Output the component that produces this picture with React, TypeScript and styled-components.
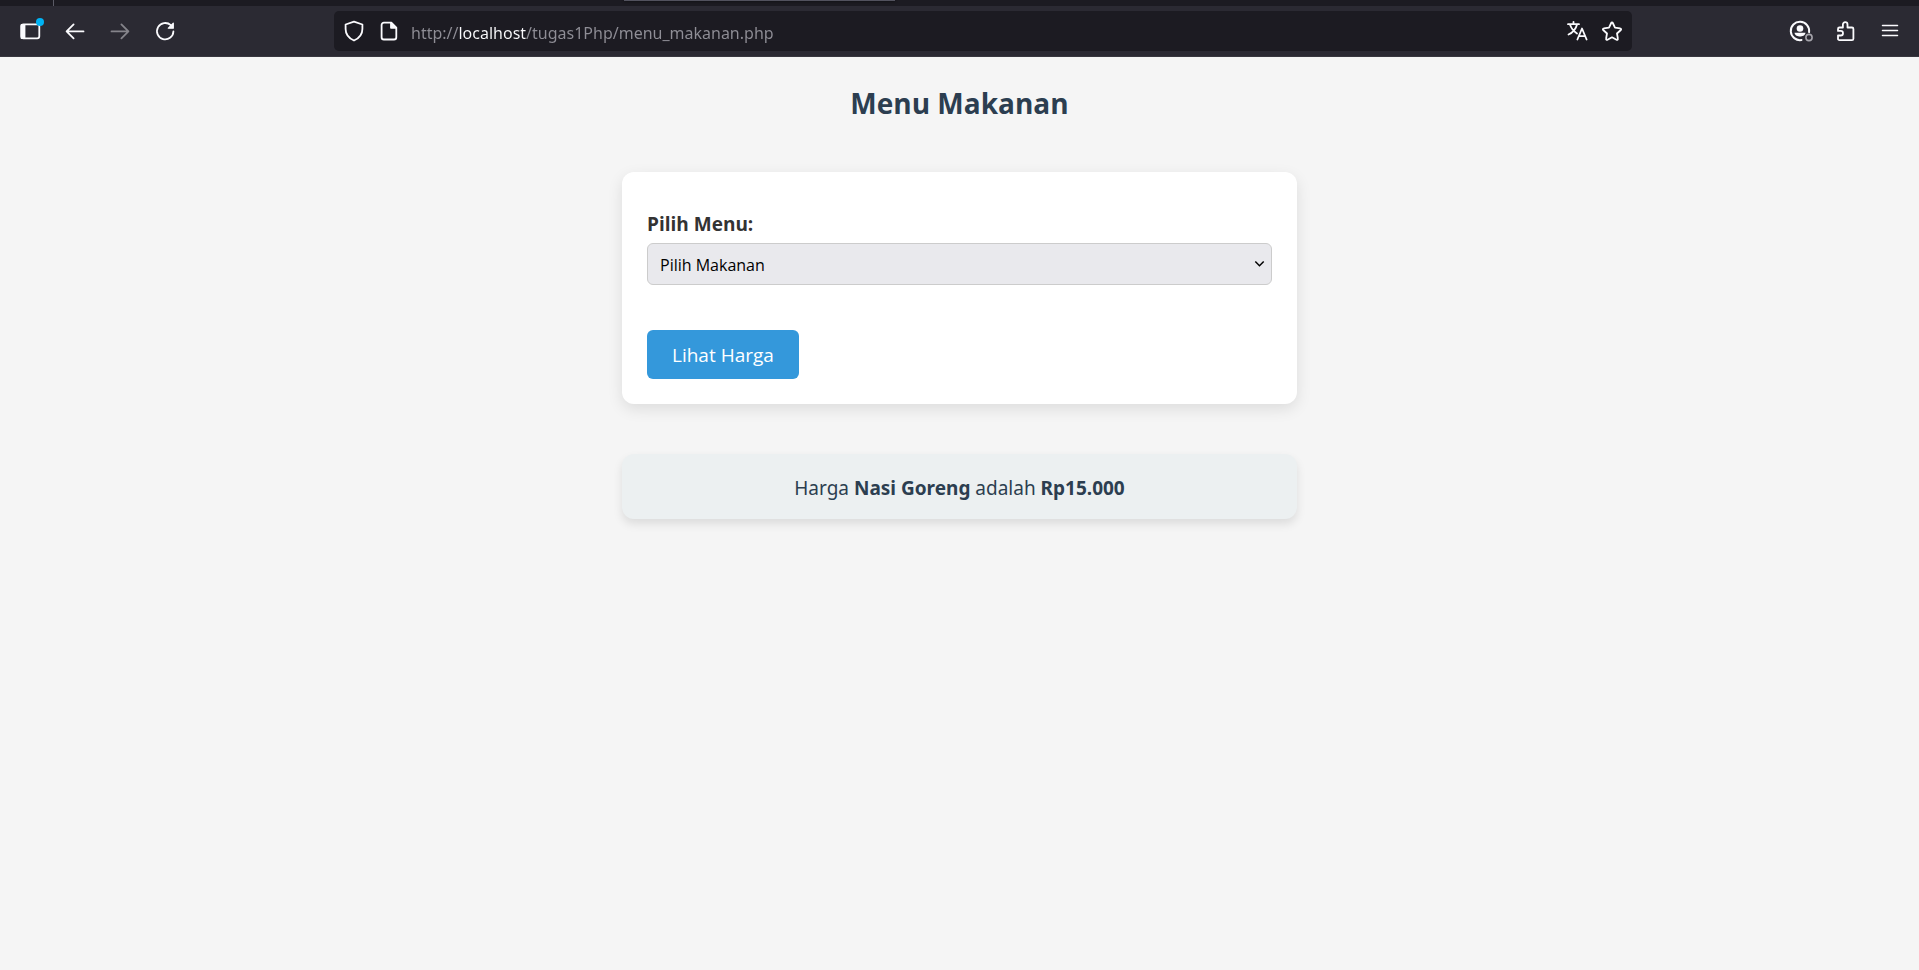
import React, { useState } from 'react';
import styled, { createGlobalStyle } from 'styled-components';

const GlobalStyle = createGlobalStyle`
  * { box-sizing: border-box; }
  body {
    margin: 0;
    background: #f5f5f5;
    color: #333;
    font-family: "Open Sans", "Noto Sans", sans-serif;
  }
`;

const Window = styled.div`
  display: flex;
  flex-direction: column;
  min-height: 100vh;
`;

const TabStrip = styled.div`
  display: flex;
  height: 6px;
  background: #1c1b22;
`;

const TabDivider = styled.span`
  width: 1px;
  margin-left: 53px;
  background: #5b5b66;
`;

const ActiveTab = styled.span`
  width: 271px;
  height: 1px;
  margin-left: 570px;
  background: #52525e;
  box-shadow: 0 0 3px #000;
`;

const Toolbar = styled.header`
  display: grid;
  grid-template-columns: 327px minmax(0, 1fr) 280px;
  align-items: center;
  height: 51px;
  padding: 0 7px;
  background: #2b2a33;
  border-bottom: 1px solid #38373f;
`;

const ButtonGroup = styled.div<{ $end?: boolean }>`
  display: flex;
  justify-content: ${(p) => (p.$end ? 'flex-end' : 'flex-start')};
`;

const IconButton = styled.button<{ $narrow?: boolean }>`
  display: flex;
  align-items: center;
  justify-content: center;
  width: ${(p) => (p.$narrow ? 35 : 45)}px;
  height: 40px;
  padding: 0;
  border: 0;
  background: none;
  color: #fbfbfe;

  &:disabled { color: #85848b; }
`;

const AddressBar = styled.div`
  display: flex;
  align-items: center;
  height: 40px;
  padding: 0 3px 0 2px;
  border-radius: 5px;
  background: #1c1b22;
`;

const AddressInput = styled.input`
  flex: 1;
  min-width: 0;
  height: 40px;
  margin-left: 5px;
  padding: 3px 0 0;
  border: 0;
  outline: 0;
  background: linear-gradient(90deg, #8f8e96 48px, #fbfbfe 48px 115px, #8f8e96 115px);
  background-clip: text;
  -webkit-background-clip: text;
  color: transparent;
  caret-color: #fbfbfe;
  font: 16px "Noto Sans", "Open Sans", sans-serif;
`;

const Page = styled.main`
  display: flex;
  flex-direction: column;
  align-items: center;
  padding: 26px 25px;
`;

const Title = styled.h2`
  margin: 0 0 49px;
  color: #2c3e50;
  font-size: 28px;
  font-weight: 700;
  line-height: 40px;
`;

const Card = styled.form`
  width: 100%;
  max-width: 675px;
  padding: 40px 25px 25px;
  border-radius: 12px;
  background: #fff;
  box-shadow: 0 5px 15px rgba(0, 0, 0, 0.1);
`;

const Label = styled.label`
  display: block;
  margin-bottom: 6px;
  font-size: 19px;
  font-weight: 700;
  line-height: 25px;
`;

const SelectBox = styled.div`
  display: grid;
  align-items: center;
  margin-bottom: 45px;

  > * { grid-area: 1 / 1; }
  > svg { justify-self: end; margin-right: 7px; pointer-events: none; }
`;

const Select = styled.select`
  width: 100%;
  height: 42px;
  padding: 1px 12px 0;
  border: 1px solid #ccc;
  border-radius: 6px;
  appearance: none;
  background: #e9e9ed;
  color: #000;
  font: 16px "Open Sans", "Noto Sans", sans-serif;
`;

const SubmitButton = styled.button`
  display: block;
  height: 49px;
  padding: 1px 25px 0;
  border: 0;
  border-radius: 6px;
  background: #3498db;
  color: #fff;
  font: 19px "Open Sans", "Noto Sans", sans-serif;
  cursor: pointer;
`;

const Result = styled.output`
  display: block;
  width: 100%;
  max-width: 675px;
  margin-top: 50px;
  padding: 22px 20px 18px;
  border-radius: 12px;
  background: #ecf0f1;
  box-shadow: 0 5px 10px rgba(0, 0, 0, 0.1);
  color: #2c3e50;
  font-family: "Noto Sans", "Open Sans", sans-serif;
  font-size: 19px;
  line-height: 25px;
  text-align: center;
`;

const Svg = ({ children, size = 24 }: { children: React.ReactNode; size?: number }) => (
  <svg
    width={size}
    height={size}
    viewBox={`0 0 ${size} ${size}`}
    fill="none"
    stroke="currentColor"
    strokeWidth="1.8"
    strokeLinecap="round"
    strokeLinejoin="round"
    aria-hidden="true"
  >
    {children}
  </svg>
);

const SidebarIcon = () => (
  <Svg size={30}>
    <rect x="6.3" y="8.3" width="18" height="14" rx="2" />
    <path d="M6.500 9h3v13h-3z" fill="currentColor" />
    <circle cx="25" cy="6" r="4" fill="#00b3f4" stroke="none" />
  </Svg>
);

const BackIcon = () => (
  <Svg><path d="M20.5 12.4H4M10.6 5.4l-7 7 7 7" /></Svg>
);

const ForwardIcon = () => (
  <Svg><path d="M3.5 12.4H20M13.4 5.4l7 7-7 7" /></Svg>
);

const ReloadIcon = () => (
  <Svg>
    <path d="M20.4 12.5a8.2 8.2 0 1 1-2.6-6.3" />
    <path d="M20.3 4.2v5h-5z" fill="currentColor" strokeWidth="1.2" />
  </Svg>
);

const ShieldIcon = () => (
  <Svg><path d="M12 2.600 20.4 5.500v4.400c0 4.700-3.400 9.300-8.400 11.600-5-2.300-8.400-6.900-8.400-11.600V5.500z" /></Svg>
);

const PageIcon = () => (
  <Svg>
    <path d="M6.900 3.600h7.400l5 5v9.600a2.300 2.300 0 0 1-2.300 2.300H6.900a2.300 2.300 0 0 1-2.300-2.300V5.900a2.300 2.300 0 0 1 2.300-2.300z" />
    <path d="M14 3.800v5h5z" fill="currentColor" />
  </Svg>
);

const TranslateIcon = () => (
  <Svg>
    <path d="M3 5.200h11M8.500 2.800v2.400M5 5.500c1.200 4 4 7 7 9M12 5.500c-1 4-4 8-8.500 10" />
    <path d="m12.400 20.500 4.600-11 4.600 11M14 17.200h6" />
  </Svg>
);

const StarIcon = () => (
  <Svg>
    <path d="M11.200 4c.3-.8 1.300-.8 1.600 0l2.200 4.600 5.200.7c.9.100 1.200 1.100.6 1.700l-3.800 3.500.9 5.200c.2.900-.700 1.500-1.400 1.100L12 18.300l-4.500 2.500c-.7.400-1.600-.2-1.400-1.100l.9-5.200L3.200 11c-.6-.6-.3-1.600.6-1.700L9 8.600z" />
  </Svg>
);

const AccountIcon = () => (
  <Svg size={26}>
    <path d="M14.500 22a9.200 9.200 0 1 1 7.600-7.800" strokeWidth="2" />
    <circle cx="13" cy="10.500" r="3.300" fill="currentColor" stroke="none" />
    <path d="M7.500 14.800h11c-.3 3-3.400 3.700-5.500 3.700s-5.200-.7-5.500-3.700z" fill="currentColor" stroke="none" />
    <circle cx="22" cy="19.500" r="3.100" stroke="#a5a4ab" strokeWidth="1.600" />
  </Svg>
);

const PuzzleIcon = () => (
  <Svg>
    <path d="M9.900 8.500V5.500a2.300 2.300 0 0 1 4.600 0v3h4.500c.8 0 1.400.6 1.400 1.400v9.800c0 .8-.6 1.400-1.400 1.400H6.400c-.8 0-1.400-.6-1.400-1.400v-3.200h2.700a2.300 2.300 0 0 0 0-4.600H5V9.900c0-.8.600-1.400 1.400-1.400z" />
  </Svg>
);

const MenuIcon = () => (
  <Svg><path d="M4.500 6.500h15M4.500 11.500h15M4.500 16.500h15" strokeWidth="1.500" /></Svg>
);

const menu = [
  { name: 'Nasi Goreng', price: 'Rp15.000' },
  { name: 'Mie Goreng', price: 'Rp12.000' },
];

export default function App() {
  const [choice, setChoice] = useState('');
  const [shown, setShown] = useState(menu[0]);

  const submit = (event: React.FormEvent) => {
    event.preventDefault();
    const item = menu.find((entry) => entry.name === choice);
    if (item) setShown(item);
  };

  return (
    <Window>
      <GlobalStyle />
      <TabStrip>
        <TabDivider />
        <ActiveTab />
      </TabStrip>
      <Toolbar>
        <ButtonGroup>
          <IconButton aria-label="Sidebar"><SidebarIcon /></IconButton>
          <IconButton aria-label="Back"><BackIcon /></IconButton>
          <IconButton aria-label="Forward" disabled><ForwardIcon /></IconButton>
          <IconButton aria-label="Reload"><ReloadIcon /></IconButton>
        </ButtonGroup>
        <AddressBar>
          <IconButton $narrow aria-label="Protection"><ShieldIcon /></IconButton>
          <IconButton $narrow aria-label="Site information"><PageIcon /></IconButton>
          <AddressInput aria-label="Address" defaultValue="http://localhost/tugas1Php/menu_makanan.php" />
          <IconButton $narrow aria-label="Translate"><TranslateIcon /></IconButton>
          <IconButton $narrow aria-label="Bookmark"><StarIcon /></IconButton>
        </AddressBar>
        <ButtonGroup $end>
          <IconButton aria-label="Account"><AccountIcon /></IconButton>
          <IconButton aria-label="Extensions"><PuzzleIcon /></IconButton>
          <IconButton aria-label="Menu"><MenuIcon /></IconButton>
        </ButtonGroup>
      </Toolbar>
      <Page>
        <Title>Menu Makanan</Title>
        <Card onSubmit={submit}>
          <Label htmlFor="menu">Pilih Menu:</Label>
          <SelectBox>
            <Select id="menu" value={choice} onChange={(e) => setChoice(e.target.value)}>
              <option value="">Pilih Makanan</option>
              {menu.map((item) => (
                <option key={item.name} value={item.name}>{item.name}</option>
              ))}
            </Select>
            <svg width="11" height="8" viewBox="0 0 11 8" fill="none" stroke="#000" strokeWidth="1.500" aria-hidden="true">
              <path d="m1.300 1.500 4.200 4.200 4.200-4.200" />
            </svg>
          </SelectBox>
          <SubmitButton type="submit">Lihat Harga</SubmitButton>
        </Card>
        <Result htmlFor="menu">
          Harga <strong>{shown.name}</strong> adalah <strong>{shown.price}</strong>
        </Result>
      </Page>
    </Window>
  );
}
